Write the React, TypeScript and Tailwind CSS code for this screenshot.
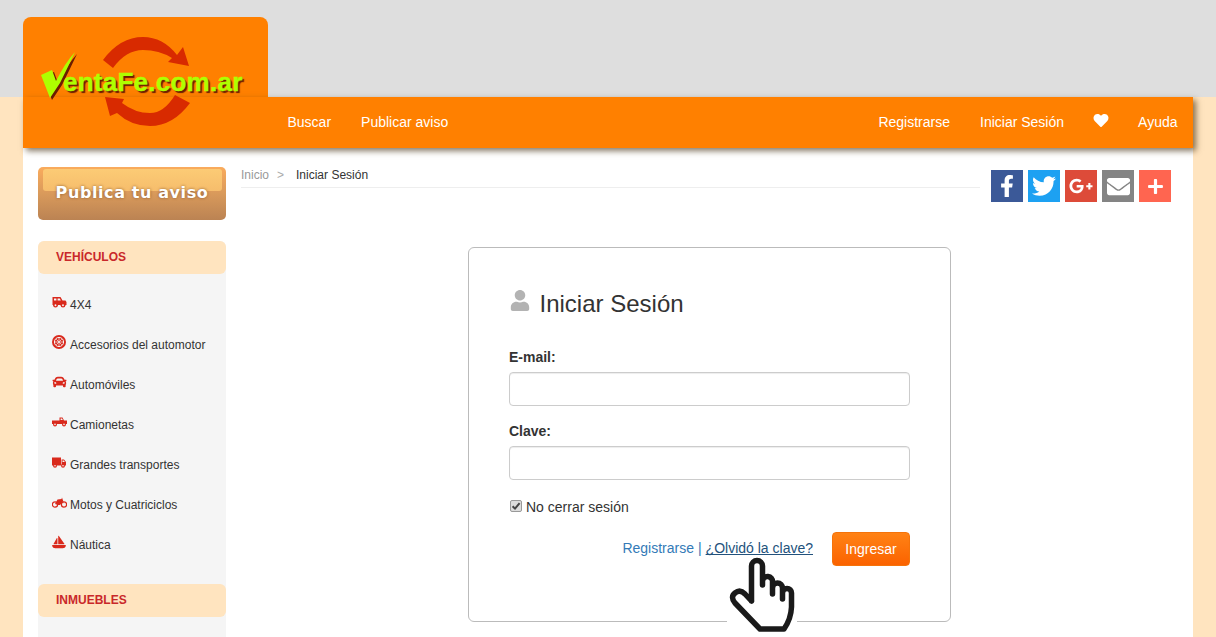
import React from "react";
import { FaFacebookF, FaTwitter, FaGooglePlusG, FaEnvelope, FaPlus, FaHeart, FaUser, FaCar } from "react-icons/fa";
import { FaSailboat } from "react-icons/fa6";

function Wheel() {
  return (
    <svg viewBox="0 0 14 14" className="w-[14px] h-[14px]">
      <circle cx="7" cy="7" r="7" fill="#d9291c" />
      <circle cx="7" cy="7" r="4.6" fill="none" stroke="#f5f5f5" strokeWidth="1" />
      <path d="M7 3v8M3 7h8M4.2 4.2l5.6 5.6M9.8 4.2l-5.6 5.6" stroke="#f5f5f5" strokeWidth="0.7" />
    </svg>
  );
}

const R = "#d9291c";
const Hub = ({ x, y, r = 2 }: { x: number; y: number; r?: number }) => (
  <>
    <circle cx={x} cy={y} r={r} fill={R} />
    <circle cx={x} cy={y} r={r * 0.4} fill="#f5f5f5" />
  </>
);

function Jeep() {
  return (
    <svg viewBox="0 0 15 12" className="w-[15px] h-[12px]">
      <path d="M0.5 1 H8.5 L10.5 4.5 H13.5 L14.5 6 V9 H0.5 Z" fill={R} />
      <path d="M2 2.4 H4.4 V4.5 H2 Z M5.6 2.4 H7.8 L8.8 4.5 H5.6 Z" fill="#f5f5f5" />
      <Hub x={3.5} y={9.2} r={2.4} />
      <Hub x={11} y={9.2} r={2.4} />
    </svg>
  );
}

function Pickup() {
  return (
    <svg viewBox="0 0 15 10" className="w-[15px] h-[10px]">
      <path d="M0 3.4 H7.5 V0.5 H10.5 L12 3.4 H15 V7 H0 Z" fill={R} />
      <path d="M8.6 1.5 H10 L10.8 3 H8.6 Z" fill="#f5f5f5" />
      <Hub x={3} y={7.4} r={2} />
      <Hub x={12} y={7.4} r={2} />
    </svg>
  );
}

function Truck() {
  return (
    <svg viewBox="0 0 14 11" className="w-[14px] h-[11px]">
      <path d="M0 0.5 H9 V8.5 H0 Z M9.6 2.5 H12 L14 5 V8.5 H9.6 Z" fill={R} />
      <path d="M10.5 3.4 H11.7 L12.9 4.9 H10.5 Z" fill="#f5f5f5" />
      <Hub x={3} y={8.8} r={2} />
      <Hub x={11} y={8.8} r={2} />
    </svg>
  );
}

function Moto() {
  return (
    <svg viewBox="0 0 15 11" className="w-[15px] h-[11px]">
      <circle cx="3" cy="7.5" r="2.6" fill="none" stroke={R} strokeWidth="1.2" />
      <circle cx="12" cy="7.5" r="2.6" fill="none" stroke={R} strokeWidth="1.2" />
      <path d="M3 7 L5.5 2.5 L9.5 2 L10 0.5 L12.4 7.5 L11 4.5 L8 8 H6 Z" fill={R} />
    </svg>
  );
}

const items: [React.ReactNode, string][] = [
  [<Jeep />, "4X4"],
  [<Wheel />, "Accesorios del automotor"],
  [<FaCar className="w-[15px] h-[14px]" />, "Automóviles"],
  [<Pickup />, "Camionetas"],
  [<Truck />, "Grandes transportes"],
  [<Moto />, "Motos y Cuatriciclos"],
  [<FaSailboat className="w-[14px] h-[16px]" />, "Náutica"],
];

function CatHeader({ children }: { children: React.ReactNode }) {
  return (
    <div className="h-[33px] flex items-center pl-[18px] pb-[2px] bg-[#ffe4bf] rounded-[6px] text-[12px] font-bold text-[#c9282a]">
      {children}
    </div>
  );
}

function Logo() {
  return (
    <div className="absolute left-0 top-0 w-[245px] h-[131px]">
      <svg viewBox="0 0 245 131" className="absolute inset-0 w-full h-full">
        <path d="M80 43 Q97 20 120 20 Q140 20 154 38 L160 30 L166 49 L145 45 L149 41 Q136 33 120 33 Q103 33 90 51 Z" fill="#d82a00" />
        <path d="M167 86 Q150 109 127 109 Q108 109 94 96 L87 99 L82 80 L101 82 L99 86 Q112 96 127 96 Q141 96 152 78 Z" fill="#d82a00" />
        <path d="M20 60 L31 55 L35 66 Q44 48 54 37 Q46 54 39 68 L29 83 Z" fill="#6b1d00" />
        <path d="M18 58 L29 53 L33 64 Q42 46 52 35 Q44 52 37 66 L27 81 Z" fill="#aeff00" />
      </svg>
      <span className="absolute left-[40px] top-[50px] font-['Liberation_Sans',sans-serif] text-[26px] leading-[30px] font-bold tracking-[0.25px] text-[#aeff00] [-webkit-text-stroke:0.4px_#aeff00] [text-shadow:2px_2px_1px_#6b1d00] whitespace-nowrap">
        entaFe.com.ar
      </span>
    </div>
  );
}

function Hand() {
  return (
    <svg viewBox="0 0 70 76" className="absolute left-[727px] top-[557px] w-[70px] h-[76px] bg-white">
      <path
        d="M24.5 44 V9 a5.5 5.5 0 0 1 11 0 V28 M35.5 28 V24 a5 5 0 0 1 10 1 V37 M45.5 31 a5 5 0 0 1 10 0 V42 M55.5 36 a4.5 4.5 0 0 1 9 0 V50 Q64 62 57 72 H33 L8 46 Q3 40 8 36 Q13 32 18 37 L24.5 44"
        fill="none"
        stroke="#1a1a1a"
        strokeWidth="5.5"
        strokeLinecap="round"
        strokeLinejoin="round"
      />
    </svg>
  );
}

const social: [string, React.ReactNode][] = [
  ["bg-[#3b5998]", <FaFacebookF className="w-[22px] h-[22px]" />],
  ["bg-[#1da1f2]", <FaTwitter className="w-[24px] h-[24px]" />],
  ["bg-[#dd4b39]", <FaGooglePlusG className="w-[24px] h-[24px]" />],
  ["bg-[#848484]", <FaEnvelope className="w-[23px] h-[23px]" />],
  ["bg-[#ff6550]", <FaPlus className="w-[17px] h-[17px]" />],
];

export default function App() {
  return (
    <div className="relative w-[1216px] h-[637px] overflow-hidden bg-[#ffe4bf] font-['Liberation_Sans',Arial,sans-serif] text-[#333]">
      <div className="h-[97px] bg-[#dedede] pt-[17px] pl-[23px]">
        <div className="w-[245px] h-[80px] bg-[#ff8000] rounded-t-[8px]" />
      </div>

      <div className="mx-[23px] w-[1170px] bg-white h-[540px]">
        <div className="relative z-10 h-[51px] bg-[#ff8000] shadow-[3px_3px_6px_rgba(70,50,20,0.65)] flex items-center justify-between text-white text-[14px] pl-[264.5px] pr-[15.5px]">
          <div className="flex gap-[30px]">
            <span>Buscar</span>
            <span>Publicar aviso</span>
          </div>
          <div className="flex items-center gap-[30px]">
            <span>Registrarse</span>
            <span>Iniciar Sesión</span>
            <FaHeart className="w-[16px] h-[15px] -ml-[1px] -translate-y-[2px]" />
            <span className="-ml-[1px]">Ayuda</span>
          </div>
        </div>

        <div className="flex pl-[15px] pt-[19px]">
          <aside className="w-[188px] shrink-0">
            <div className="relative h-[53px] rounded-[5px] bg-gradient-to-b from-[#faab5c] via-[#d99a5b] to-[#bb8353] flex items-center justify-center">
              <div className="absolute left-[5px] right-[4px] top-[2px] h-[22px] rounded-[3px] bg-gradient-to-b from-[#fccb75] to-[#f6bd6c]" />
              <span className="relative mt-[-1px] font-['DejaVu_Sans',sans-serif] font-bold text-[16px] tracking-[0.6px] text-white [text-shadow:0_0_3px_#8a5a30] whitespace-nowrap">
                Publica tu aviso
              </span>
            </div>

            <div className="mt-[21px] bg-[#f5f5f5] pb-[20px] rounded-t-[6px]">
              <CatHeader>VEHÍCULOS</CatHeader>
              <ul className="pt-[11px] pb-[19px]">
                {items.map(([icon, label]) => (
                  <li key={label} className="h-[40px] flex items-center pl-[14px] text-[12px] text-[#333]">
                    <span className="w-[18px] h-[16px] flex items-center -translate-y-[3px] text-[#d9291c]">{icon}</span>
                    <span>{label}</span>
                  </li>
                ))}
              </ul>
              <CatHeader>INMUEBLES</CatHeader>
            </div>
          </aside>

          <main className="flex-1 pl-[15px] min-w-0">
            <div className="flex items-start">
              <div className="w-[739px] h-[21px] border-b border-[#eeeeee] text-[12px] leading-[16px] text-[#999] flex">
                <span>Inicio</span>
                <span className="ml-[8px] text-[#aaa]">&gt;</span>
                <span className="ml-[12px] text-[#333]">Iniciar Sesión</span>
              </div>
              <div className="ml-[11px] flex gap-[5px] mt-[3px]">
                {social.map(([bg, icon], i) => (
                  <span key={i} className={`w-[32px] h-[32px] flex items-center justify-center text-white ${bg}`}>
                    {icon}
                  </span>
                ))}
              </div>
            </div>

            <section className="relative ml-[227px] mt-[45px] w-[483px] h-[375px] border border-[#bbbbbb] rounded-[6px] bg-white px-[40px] pt-[40px]">
              <h1 className="flex items-center text-[24px] leading-[32px] text-[#333] pl-[1px]">
                <FaUser className="w-[20px] h-[21px] text-[#b3b3b3] mr-[9.5px] -translate-y-[4px]" />
                Iniciar Sesión
              </h1>
              <label className="block mt-[27px] text-[14px] leading-[20px] font-bold text-[#333]">E-mail:</label>
              <div className="mt-[5px] h-[34px] w-[401px] border border-[#cccccc] rounded-[4px] bg-white shadow-[inset_0_1px_1px_rgba(0,0,0,0.075)]" />
              <label className="block mt-[15px] text-[14px] leading-[20px] font-bold text-[#333]">Clave:</label>
              <div className="mt-[5px] h-[34px] w-[401px] border border-[#cccccc] rounded-[4px] bg-white shadow-[inset_0_1px_1px_rgba(0,0,0,0.075)]" />
              <div className="mt-[17px] flex items-center h-[20px] text-[14px]">
                <span className="relative w-[12px] h-[12px] ml-[1px] mr-[4px] -translate-y-[1px]">
                  <input type="checkbox" defaultChecked className="appearance-none block w-[12px] h-[12px] m-0 rounded-[2px] border border-[#999] bg-[#dcdcdc]" />
                  <svg viewBox="0 0 12 12" className="absolute inset-0 w-[12px] h-[12px]">
                    <path d="M2.6 6.2 L5 8.6 L9.6 3.2" fill="none" stroke="#444" strokeWidth="2" />
                  </svg>
                </span>
                <span>No cerrar sesión</span>
              </div>
              <div className="mt-[15px] w-[401px] flex items-center justify-end text-[14px]">
                <span className="text-[#337ab7] -translate-y-[1px]">Registrarse</span>
                <span className="text-[#337ab7] mx-[4px] -translate-y-[1px]">|</span>
                <span className="text-[#23527c] underline [text-decoration-skip-ink:none] -translate-y-[1px]">¿Olvidó la clave?</span>
                <button className="ml-[19px] w-[78px] h-[34px] rounded-[4px] bg-gradient-to-b from-[#ff8214] to-[#fb6200] text-white text-[14px] border border-[#f5730a]">
                  Ingresar
                </button>
              </div>
            </section>
          </main>
        </div>
      </div>

      <div className="absolute left-[23px] top-[17px]">
        <div className="relative z-20 w-[245px] h-[131px]">
          <Logo />
        </div>
      </div>
      <Hand />
    </div>
  );
}
